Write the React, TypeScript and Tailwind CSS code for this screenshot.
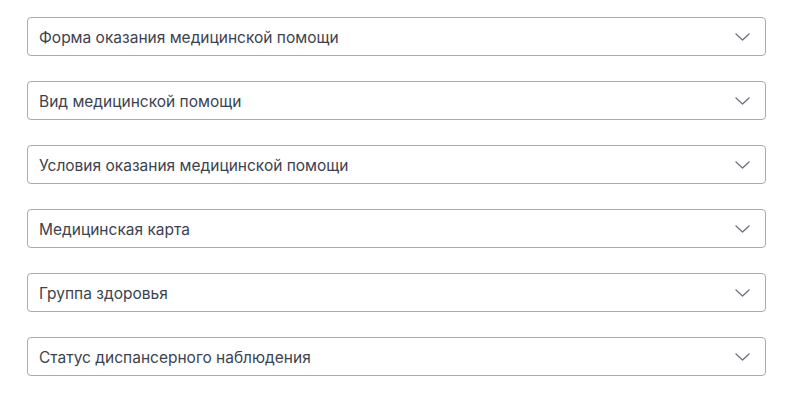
import React from "react";

const items = [
  "Форма оказания медицинской помощи",
  "Вид медицинской помощи",
  "Условия оказания медицинской помощи",
  "Медицинская карта",
  "Группа здоровья",
  "Статус диспансерного наблюдения",
];

export default function App() {
  return (
    <div className="w-[800px] h-[396px] bg-white pl-[27px] pt-[17px] flex flex-col gap-[25px]" style={{ fontFamily: "Inter, 'Noto Sans', sans-serif" }}>
      {items.map((t) => (
        <div key={t} className="w-[739px] h-[39px] border border-[#a8abb0] rounded-[4px] flex items-center justify-between pl-[11px] pr-[15px]">
          <span className="text-[15.5px] text-[#3b4350] pt-[2px]">{t}</span>
          <svg width="15" height="8" viewBox="0 0 15 8" fill="none">
            <path d="M1 1l6.5 6L14 1" stroke="#6b7280" strokeWidth="1.3" strokeLinecap="round" strokeLinejoin="round" />
          </svg>
        </div>
      ))}
    </div>
  );
}
